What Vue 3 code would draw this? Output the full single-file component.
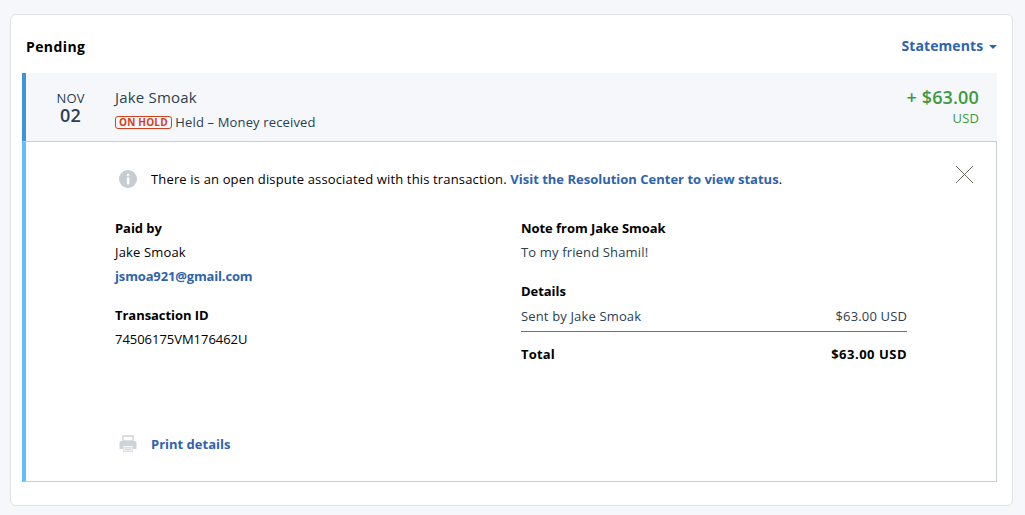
<script setup>
const rows = [{ label: 'Sent by Jake Smoak', value: '$63.00 USD' }]
</script>

<template>
  <div class="page">
    <section class="card">
      <header class="top">
        <h1>Pending</h1>
        <a class="statements">Statements <span class="caret"></span></a>
      </header>
      <div class="summary">
        <div class="date"><span class="mon">NOV</span><span class="day">02</span></div>
        <div class="who">
          <div class="name">Jake Smoak</div>
          <div class="status"><span class="badge">ON HOLD</span> Held – Money received</div>
        </div>
        <div class="amount">
          <div class="sum">+ $63.00</div>
          <div class="cur">USD</div>
        </div>
      </div>
      <div class="panel">
        <div class="notice">
          <svg class="info" width="18" height="18" viewBox="0 0 18 18">
            <circle cx="9" cy="9" r="9" fill="#c5ccd3" />
            <rect x="7.800" y="3.600" width="2.600" height="2.600" rx="1.300" fill="#fff" />
            <rect x="7.800" y="7.400" width="2.600" height="7" fill="#fff" />
          </svg>
          <p>There is an open dispute associated with this transaction. <a class="link">Visit the Resolution Center to view status</a>.</p>
          <svg class="close" width="19" height="19" viewBox="0 0 19 19">
            <path d="M1 1 L18 18 M18 1 L1 18" stroke="#6b6a58" stroke-width="1" fill="none" />
          </svg>
        </div>
        <div class="cols">
          <div class="col left">
            <h2>Paid by</h2>
            <p>Jake Smoak</p>
            <p><a class="link mail">jsmoa921@gmail.com</a></p>
            <h2 class="gap">Transaction ID</h2>
            <p class="txn">74506175VM176462U</p>
          </div>
          <div class="col right">
            <h2>Note from Jake Smoak</h2>
            <p class="soft">To my friend Shamil!</p>
            <h2 class="gap">Details</h2>
            <div v-for="r in rows" :key="r.label" class="line soft">
              <span>{{ r.label }}</span><span>{{ r.value }}</span>
            </div>
            <div class="line total"><span>Total</span><span class="total-value">$63.00 USD</span></div>
          </div>
        </div>
        <div class="print">
          <svg width="18" height="18" viewBox="0 0 18 18">
            <path d="M4 1h10v5H4z" fill="#fff" stroke="#cdd3d9" stroke-width="1.400" />
            <path d="M2 6h14a1.500 1.500 0 0 1 1.500 1.500V14H14v3H4v-3H.5V7.500A1.500 1.500 0 0 1 2 6z" fill="#cdd3d9" />
            <path d="M4.500 11h9v5.500h-9z" fill="#f4f6f8" />
            <path d="M5.500 12.800h7M5.500 14.800h7" stroke="#cdd3d9" stroke-width="1" />
          </svg>
          <a class="link">Print details</a>
        </div>
      </div>
    </section>
  </div>
</template>

<style>
html, body { margin: 0; background: #f5f7fa; }
</style>

<style scoped>
.page {
  height: 515px;
  box-sizing: border-box;
  padding: 14px 12px 9px 10px;
  font-family: "Open Sans", "Noto Sans", sans-serif;
  font-size: 13px;
  letter-spacing: 0.15px;
  color: #2c2e2f;
  overflow: hidden;
}
.card {
  height: 492px;
  box-sizing: border-box;
  background: #fff;
  border: 1px solid #e1e3e6;
  border-radius: 6px;
  padding: 0 15px 23px 11px;
  display: flex;
  flex-direction: column;
}
.top {
  height: 58px;
  display: flex;
  align-items: center;
  justify-content: space-between;
  padding: 3px 0 0 4px;
  box-sizing: border-box;
}
h1 { margin: 2px 0 0; font-size: 14px; font-weight: 700; color: #000; letter-spacing: 0.4px; }
.statements { font-size: 14px; font-weight: 700; color: #2f63ad; letter-spacing: 0.1px; }
.caret {
  display: inline-block;
  border: 4px solid transparent;
  border-top: 4px solid #2f63ad;
  border-bottom: 0;
  margin-left: 2px;
  vertical-align: 2px;
}
.summary {
  height: 68px;
  flex: none;
  display: flex;
  background: #f5f7fa;
  border-left: 4px solid #3d93dc;
  box-sizing: border-box;
}
.date {
  width: 89px;
  flex: none;
  display: flex;
  flex-direction: column;
  align-items: center;
  padding-top: 18px;
  color: #2c3e50;
}
.mon { font-size: 13px; line-height: 15px; }
.day { font-size: 18px; line-height: 19px; font-weight: 600; }
.who { flex: 1; padding-top: 14px; }
.name { font-size: 15px; line-height: 20px; color: #2c3e50; letter-spacing: 0.2px; }
.status { font-size: 13px; line-height: 18px; margin-top: 6px; color: #2c3e50; }
.badge {
  display: inline-block;
  border: 1px solid #d2401c;
  border-radius: 3px;
  color: #d2401c;
  font-size: 10px;
  font-weight: 700;
  line-height: 11px;
  padding: 0 3px;
  vertical-align: 1px;
  letter-spacing: 0.2px;
}
.amount { text-align: right; padding: 13px 18px 0 0; color: #3d9a3d; }
.sum { font-size: 18px; line-height: 22px; font-weight: 600; }
.cur { font-size: 13px; line-height: 18px; margin-top: 1px; }
.panel {
  flex: 1;
  box-sizing: border-box;
  border: 1px solid #c9ced3;
  border-left: 4px solid #62bfff;
  padding: 0 0 0 89px;
  color: #000;
  display: flex;
  flex-direction: column;
}
.notice { position: relative; height: 73px; display: flex; align-items: center; box-sizing: border-box; }
.notice .info { margin-left: 4px; flex: none; }
.notice p { margin: 0 0 0 14px; color: #000; }
.close { position: absolute; right: 22px; top: 23px; }
.link { color: #2f63ad; font-weight: 700; letter-spacing: 0; }
.mail { letter-spacing: -0.15px; }
.cols { display: flex; padding-top: 1px; }
.col.left { width: 406px; flex: none; }
.col.right { width: 386px; flex: none; }
h2 { margin: 0; font-size: 13px; line-height: 24px; font-weight: 700; color: #000; letter-spacing: -0.05px; }
.col p { margin: 0; line-height: 24px; }
.col p.txn { letter-spacing: -0.03px; }
.col p.soft, .soft { color: #2c3e50; }
h2.gap { margin-top: 15px; }
.line { display: flex; justify-content: space-between; line-height: 24px; padding-top: 1px; padding-bottom: 3px; }
.line.soft { border-bottom: 1px solid #6c7378; }
.total { font-weight: 700; color: #000; padding-top: 10px; }
.total-value { letter-spacing: 0.5px; }
.print {
  margin-top: auto;
  height: 75px;
  display: flex;
  align-items: center;
  padding: 0 0 0 4px;
  gap: 14px;
}
</style>
